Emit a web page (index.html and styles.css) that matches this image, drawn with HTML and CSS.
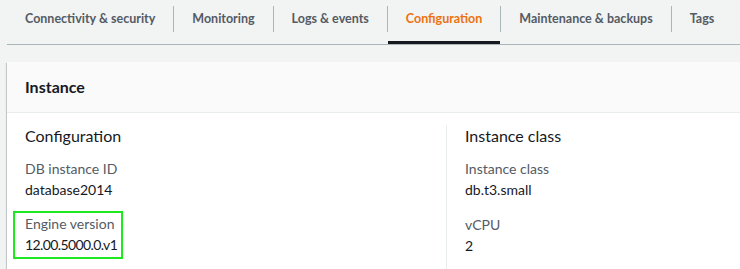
FILE: index.html
```html
<!doctype html>
<html lang="en">
<head>
	<meta charset="utf-8">
	<title>Database details</title>
	<link rel="stylesheet" href="styles.css">
</head>
<body>
	<nav class="tabs">
		<a class="tab">Connectivity &amp; security</a>
		<span class="tab-sep"></span>
		<a class="tab">Monitoring</a>
		<span class="tab-sep"></span>
		<a class="tab">Logs &amp; events</a>
		<span class="tab-sep"></span>
		<a class="tab tab-active">Configuration</a>
		<span class="tab-sep"></span>
		<a class="tab">Maintenance &amp; backups</a>
		<span class="tab-sep"></span>
		<a class="tab">Tags</a>
	</nav>

	<section class="card">
		<h2 class="card-header">Instance</h2>
		<div class="card-body">
			<div class="col">
				<h3 class="col-title">Configuration</h3>
				<div class="field">
					<div class="field-label">DB instance ID</div>
					<div class="field-value">database2014</div>
				</div>
				<div class="field field-marked">
					<div class="field-label">Engine version</div>
					<div class="field-value field-version">12.00.5000.0.v1</div>
				</div>
			</div>
			<div class="col">
				<h3 class="col-title">Instance class</h3>
				<div class="field">
					<div class="field-label">Instance class</div>
					<div class="field-value">db.t3.small</div>
				</div>
				<div class="field">
					<div class="field-label">vCPU</div>
					<div class="field-value">2</div>
				</div>
			</div>
		</div>
	</section>
</body>
</html>
```

FILE: styles.css
```css
* {
	box-sizing: border-box;
}
body {
	margin: 0;
	padding: 0 0 0 7px;
	background: #f2f3f3;
	color: #16191f;
	font-family: Lato, "Open Sans", sans-serif;
	overflow: hidden;
}

.tabs {
	display: flex;
	height: 45px;
	border-bottom: 1px solid #aab7b8;
	white-space: nowrap;
}
.tab {
	padding: 8px 18px 0;
	line-height: 22px;
	font-size: 12.5px;
	font-weight: 700;
	color: #545b64;
	border-bottom: 3px solid transparent;
}
.tab-active {
	color: #ec7211;
	border-bottom-color: #16191f;
}
.tab-sep {
	flex: none;
	width: 1px;
	height: 26px;
	margin-top: 6px;
	background: #aab7b8;
}

.card {
	width: 1000px;
	margin-top: 17px;
	background: #fff;
	box-shadow: 0 1px 1px 0 rgba(0, 28, 36, .3), 1px 1px 1px 0 rgba(0, 28, 36, .15), -1px 1px 1px 0 rgba(0, 28, 36, .15);
}
.card-header {
	margin: 0;
	height: 51px;
	padding: 14px 18px 0;
	line-height: 22px;
	font-size: 16px;
	font-weight: 700;
	background: #fafafa;
	border-bottom: 1px solid #eaeded;
}
.card-body {
	display: grid;
	grid-template-columns: 421px 421px;
	padding: 12px 18px 0;
}
.col + .col {
	border-left: 1px solid #eaeded;
	padding-left: 18px;
}
.col-title {
	margin: 0 0 11px;
	font-size: 16px;
	line-height: 22px;
	font-weight: 400;
}
.field {
	margin-bottom: 14px;
	font-size: 14px;
	line-height: 21px;
}
.field-label {
	color: #545b64;
}
.field-marked {
	width: 110px;
	margin: -3px 0 0 -12px;
	padding: 0 0 2px 10px;
	border: 2px solid #1ee81e;
}
.field-version {
	letter-spacing: -.6px;
}
```
